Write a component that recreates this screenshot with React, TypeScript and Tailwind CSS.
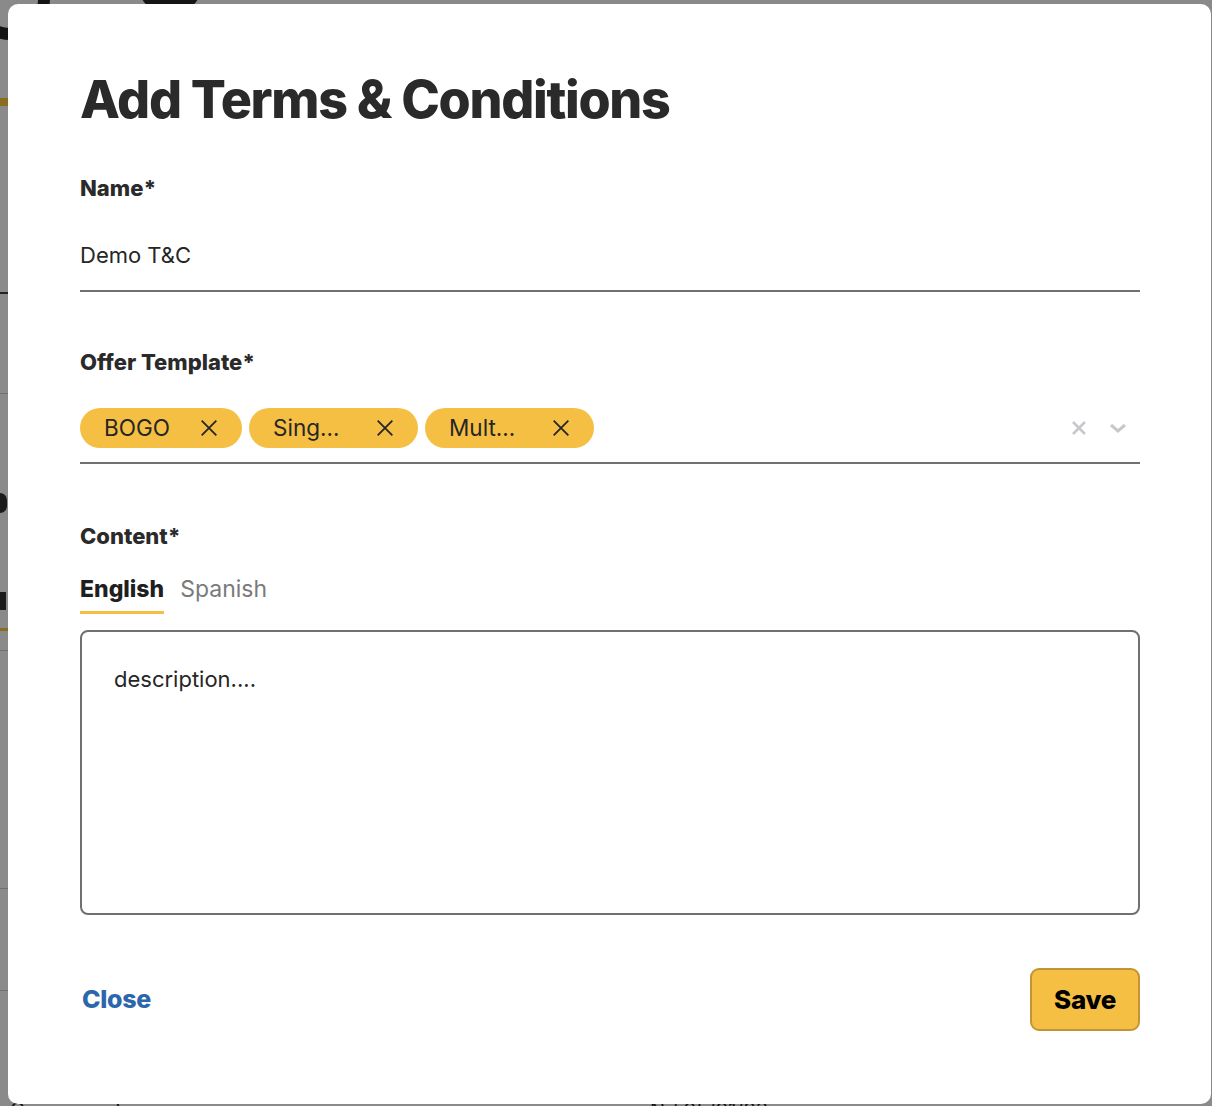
import React from "react";

const XIcon = ({ className = "" }: { className?: string }) => (
  <svg viewBox="0 0 24 24" className={className} fill="none" stroke="currentColor" strokeWidth={2} strokeLinecap="butt">
    <path d="M4 4L20 20M20 4L4 20" />
  </svg>
);

const Chip = ({ label, w }: { label: string; w: string }) => (
  <div className={`flex h-10 items-center justify-between rounded-full bg-[#f5bf44] pl-6 pr-[22px] ${w}`}>
    <span className="text-[22.5px] leading-none text-[#262626]">{label}</span>
    <XIcon className="h-[22px] w-[22px] text-[#262626]" />
  </div>
);

export default function App() {
  return (
    <div
      className="relative h-[1106px] w-[1212px] overflow-hidden bg-[#8a8a8a]"
      style={{ fontFamily: "Inter, 'Noto Sans', sans-serif" }}
    >
      {/* backdrop fragments */}
      <div className="absolute -left-[30px] -top-[40px] h-[80px] w-[80px] rounded-full border-[12px] border-[#151515]" />
      <div className="absolute left-[140px] -top-[30px] h-[40px] w-[60px] rounded-full border-[10px] border-[#151515]" />
      <div className="absolute left-0 top-[98px] h-[8px] w-[8px] bg-[#8a6d1f]" />
      <div className="absolute left-0 top-[292px] h-[2px] w-[8px] bg-[#222]" />
      <div className="absolute left-0 top-[393px] h-[1px] w-[8px] bg-[#6f6f6f]" />
      <div className="absolute left-0 top-[628px] h-[3px] w-[8px] bg-[#8a6d1f]" />
      <div className="absolute left-0 top-[650px] h-[1px] w-[8px] bg-[#6f6f6f]" />
      <div className="absolute left-0 top-[888px] h-[1px] w-[8px] bg-[#6f6f6f]" />
      <div className="absolute left-0 top-[990px] h-[1px] w-[8px] bg-[#6f6f6f]" />
      <div className="absolute left-0 top-[493px] h-[20px] w-[7px] rounded-r-full bg-[#1a1a1a]" />
      <div className="absolute left-0 top-[592px] h-[18px] w-[6px] bg-[#1a1a1a]" />
      <div className="absolute left-[10px] top-[1100px] text-[20px] leading-none text-[#111]">Campaign Type</div>
      <div className="absolute left-[650px] top-[1100px] text-[20px] leading-none text-[#111]">N / 05/01/23</div>

      {/* modal */}
      <div className="relative ml-[8px] mt-[4px] flex h-[1100px] w-[1203px] flex-col rounded-[10px] bg-white pl-[72px] pr-[71px] text-[#2a2a2a]">
        <h1 className="mt-[66px] text-[52px] font-extrabold leading-[60px] tracking-[-1.3px] text-[#2a2a2a]">
          Add Terms &amp; Conditions
        </h1>

        {/* Name */}
        <div className="mt-[46px] text-[22px] font-extrabold leading-6">Name*</div>
        <div className="mt-[43px] flex h-[49px] items-start border-b-2 border-[#707070]">
          <span className="text-[22px] leading-6 text-[#262626]">Demo T&amp;C</span>
        </div>

        {/* Offer template */}
        <div className="mt-[58px] text-[22px] font-extrabold leading-6">Offer Template*</div>
        <div className="mt-[34px] flex h-[56px] items-start justify-between border-b-2 border-[#707070]">
          <div className="flex gap-[7px]">
            <Chip label="BOGO" w="w-[162px]" />
            <Chip label="Sing…" w="w-[169px]" />
            <Chip label="Mult…" w="w-[169px]" />
          </div>
          <div className="flex h-10 items-center gap-[18px] pr-[10px]">
            <XIcon className="h-[18px] w-[18px] text-[#c8c8cc] [stroke-width:3.5]" />
            <svg viewBox="0 0 24 24" className="h-[24px] w-[24px] text-[#c8c8cc]" fill="none" stroke="currentColor" strokeWidth={3}>
              <path d="M5 9L12 15L19 9" />
            </svg>
          </div>
        </div>

        {/* Content */}
        <div className="mt-[60px] text-[22px] font-extrabold leading-6">Content*</div>
        <div className="mt-[27px] flex gap-[16px]">
          <div className="flex flex-col">
            <span className="text-[23px] font-extrabold leading-7 text-[#1f1f1f]">English</span>
            <div className="mt-[8px] h-[3px] w-full bg-[#f5bf44]" />
          </div>
          <span className="text-[23px] leading-7 text-[#7a7a7a]">Spanish</span>
        </div>
        <div className="mt-[16px] h-[285px] rounded-[8px] border-2 border-[#707070] px-[32px] pt-[35px]">
          <span className="text-[22px] leading-6 text-[#262626]">description....</span>
        </div>

        {/* Footer */}
        <div className="mt-[53px] flex items-center justify-between">
          <span className="pl-[2px] text-[25px] font-extrabold tracking-[-0.3px] text-[#2c66ab]">Close</span>
          <button className="flex h-[63px] w-[110px] items-center justify-center rounded-[9px] border-2 border-[#c39433] bg-[#f5bf44] text-[26px] font-extrabold tracking-[-0.3px] text-black">
            Save
          </button>
        </div>
      </div>
    </div>
  );
}
